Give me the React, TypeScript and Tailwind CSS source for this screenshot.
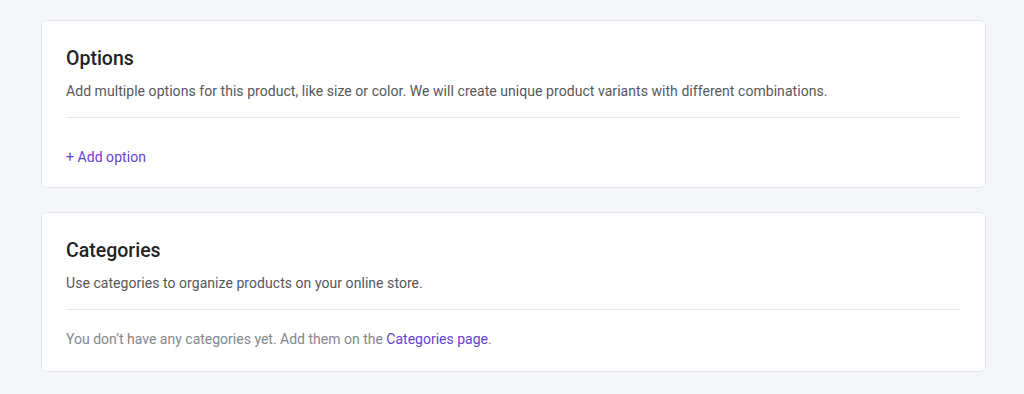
export default function App() {
  return (
    <div className="min-h-[394px] w-full bg-[#f5f6fa] pt-5 pb-6 pl-[41px] pr-[38px]" style={{ fontFamily: "Roboto, 'Noto Sans', sans-serif" }}>
      <div className="flex flex-col gap-6">
        <section className="rounded-md border border-[#e3e5ea] bg-white px-6 pt-6 pb-5">
          <h2 className="text-[19.5px] leading-7 font-medium text-[#222326]">Options</h2>
          <p className="mt-2 text-sm leading-5 tracking-[0.05px] text-[#55575c]">
            Add multiple options for this product, like size or color. We will create unique product variants with different combinations.
          </p>
          <div className="mt-4 h-px bg-[#e6e7ea]" />
          <button className="mt-[29px] block text-sm leading-5 tracking-[0.05px] text-[#5f44d0]">+ Add option</button>
        </section>
        <section className="rounded-md border border-[#e3e5ea] bg-white px-6 pt-6 pb-[22px]">
          <h2 className="text-[19.5px] leading-7 font-medium text-[#222326]">Categories</h2>
          <p className="mt-2 text-sm leading-5 tracking-[0.05px] text-[#55575c]">
            Use categories to organize products on your online store.
          </p>
          <div className="mt-4 h-px bg-[#e6e7ea]" />
          <p className="mt-[19px] text-sm leading-5 text-[#85878c]">
            You don’t have any categories yet. Add them on the <a className="text-[#5f44d0]">Categories page</a>.
          </p>
        </section>
      </div>
    </div>
  );
}
